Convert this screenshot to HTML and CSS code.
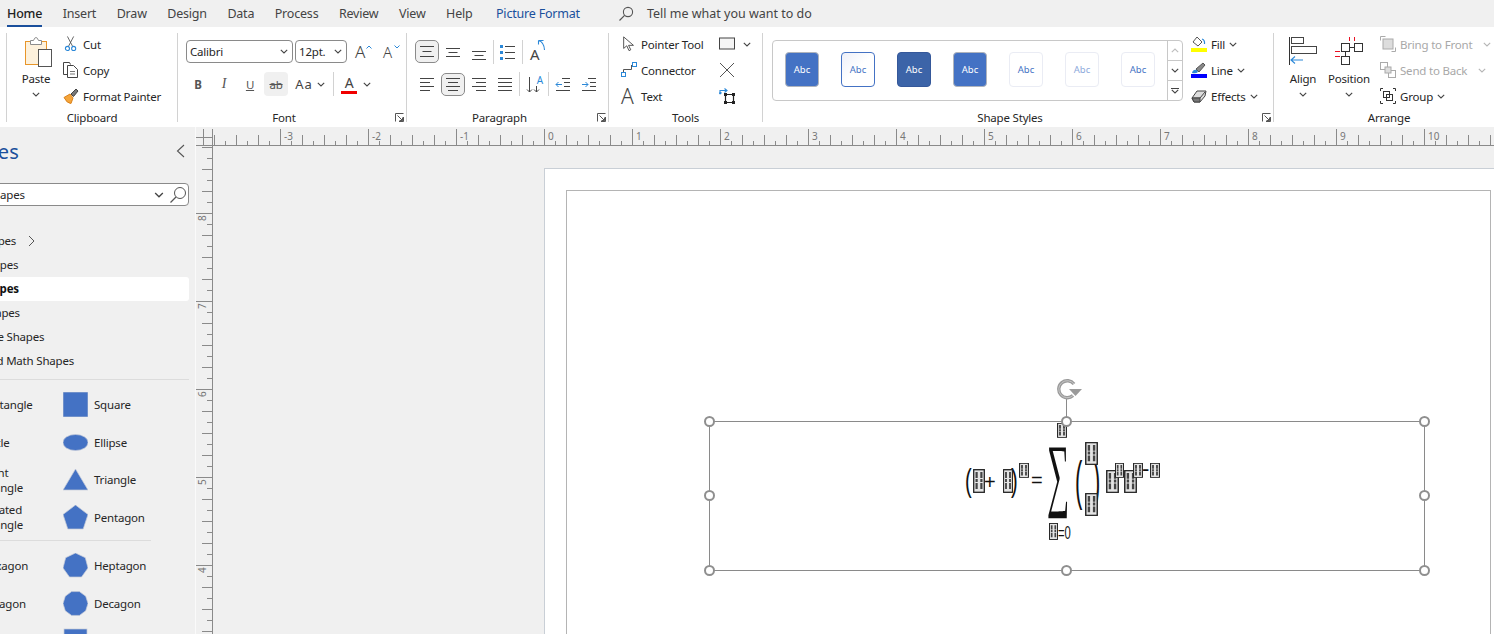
FILE: index.html
```html
<!DOCTYPE html>
<html lang="en">
<head>
    <meta charset="UTF-8">
    <title>Picture Format</title>
    <link rel="stylesheet" href="styles.css">
</head>
<body>
    <svg class="defs">
        <symbol id="chev" viewBox="0 0 8 5"><path d="M.8.8 4 4 7.2.8" fill="none" stroke="currentColor" stroke-width="1.1"/></symbol>
        <symbol id="launch" viewBox="0 0 9 9"><path d="M.5 8.5V.5h8M8.5 4v4.5H4M2.5 2.5l5 5M4.5 7.5h3v-3" fill="none" stroke="#555"/></symbol>
        <symbol id="tofu" viewBox="0 0 12 24" preserveAspectRatio="none"><rect x=".7" y=".7" width="10.6" height="22.6" fill="#e4e4e4" stroke="#222" stroke-width="1.3"/><path d="M3.600 3v18M8.400 3v18" stroke="#444" stroke-width="2.200" stroke-dasharray="6 1 3 1"/></symbol>
    </svg>

    <div class="tabs">
        <span class="tab active">Home</span>
        <span class="tab">Insert</span>
        <span class="tab">Draw</span>
        <span class="tab">Design</span>
        <span class="tab">Data</span>
        <span class="tab">Process</span>
        <span class="tab">Review</span>
        <span class="tab">View</span>
        <span class="tab">Help</span>
        <span class="tab picture">Picture Format</span>
        <svg class="tell-icon" width="16" height="16" viewBox="0 0 16 16"><circle cx="10" cy="6" r="4.6" fill="none" stroke="#555" stroke-width="1.1"/><path d="M6.6 9.4 1.5 14.5" stroke="#555" stroke-width="1.2"/></svg>
        <span class="tell">Tell me what you want to do</span>
    </div>

    <div class="ribbon">
        <section class="group clipboard first">
            <div class="big-btn paste">
                <svg width="32" height="30" viewBox="0 0 32 30"><rect x="3.500" y="4.500" width="21" height="23" fill="#fdf1dc" stroke="#e8962a"/><path d="M8.500 7.500V3.500h3q1-3 2.500-3t2.500 3h3v4z" fill="#fff" stroke="#8c8c8c"/><rect x="16.500" y="12.500" width="13" height="17" fill="#fff" stroke="#555"/></svg>
                <span>Paste</span>
                <svg class="chev"><use href="#chev"/></svg>
            </div>
            <div class="small-col">
                <div class="tool-row">
                    <svg class="ico" viewBox="0 0 16 18"><path d="M4 .5 10 12M11 .5 5 12" stroke="#555" fill="none"/><circle cx="4" cy="14" r="2.300" fill="none" stroke="#2b88d8" stroke-width="1.200"/><circle cx="11" cy="14" r="2.300" fill="none" stroke="#2b88d8" stroke-width="1.200"/></svg>
                    <span>Cut</span>
                </div>
                <div class="tool-row">
                    <svg class="ico" viewBox="0 0 16 16"><path d="M4 12.500H.5V.5h6l1 2" fill="none" stroke="#444"/><path d="M4.500 3.500h6l4 4v8h-10z" fill="#fff" stroke="#444"/><path d="M7 9.500h5M7 12h5" stroke="#777"/></svg>
                    <span>Copy</span>
                </div>
                <div class="tool-row">
                    <svg class="ico" viewBox="0 0 16 16"><path d="M1 9.500 7 6l3 4-2 5.500q-4 0-7-6z" fill="#f5a53b" stroke="#d9821d"/><path d="m8 6 5-5 2 2-4.500 5.500z" fill="#777" stroke="#444"/></svg>
                    <span>Format Painter</span>
                </div>
            </div>
            <div class="group-label">Clipboard</div>
        </section>

        <section class="group font">
            <div class="rows">
                <div class="row">
                    <div class="combo combo-name"><span>Calibri</span><svg class="chev"><use href="#chev"/></svg></div>
                    <div class="combo combo-size"><span>12pt.</span><svg class="chev"><use href="#chev"/></svg></div>
                    <span class="grow">A<svg class="caret" viewBox="0 0 6 4"><path d="M.5 3.500 3 1l2.500 2.500" fill="none" stroke="#2b88d8"/></svg></span>
                    <span class="grow shrink">A<svg class="caret" viewBox="0 0 6 4"><path d="M.5.500 3 3 5.500.500" fill="none" stroke="#2b88d8"/></svg></span>
                </div>
                <div class="row">
                    <span class="btn bold">B</span>
                    <span class="btn italic">I</span>
                    <span class="btn under">U</span>
                    <span class="btn strike on-flat">ab</span>
                    <span class="btn case">Aa<svg class="chev"><use href="#chev"/></svg></span>
                    <i class="sep sep-font"></i>
                    <span class="btn color"><span class="color-a">A</span><svg class="chev"><use href="#chev"/></svg></span>
                </div>
            </div>
            <svg class="launcher"><use href="#launch"/></svg>
            <div class="group-label">Font</div>
        </section>

        <section class="group paragraph">
            <div class="rows">
                <div class="row">
                    <span class="btn on"><svg class="ln" viewBox="0 0 16 20"><path d="M1 4.500h14M3.500 9.500h9M1 14.500h14"/></svg></span>
                    <span class="btn"><svg class="ln" viewBox="0 0 16 20"><path d="M1 6.500h14M3.500 10.500h9M1 14.500h14"/></svg></span>
                    <span class="btn"><svg class="ln" viewBox="0 0 16 20"><path d="M1 9.500h14M3.500 13.500h9M1 17.500h14"/></svg></span>
                    <i class="sep"></i>
                    <span class="btn"><svg class="ln" viewBox="0 0 16 20"><path d="M5 4.500h10M5 10.500h10M5 16.500h10"/><path d="M0 3h3v3H0zM0 9h3v3H0zM0 15h3v3H0z" fill="#2b88d8" stroke="none"/></svg></span>
                    <i class="sep"></i>
                    <span class="btn orient">A<svg class="orient-arrow" viewBox="0 0 9 11"><path d="M1.500.500h5M1.500.500v4M1.500.500Q7 2 7.500 10" fill="none" stroke="#2b88d8" stroke-width="1.100"/></svg></span>
                </div>
                <div class="row">
                    <span class="btn"><svg class="ln" viewBox="0 0 16 16"><path d="M1 2.500h14M1 6.500h10M1 10.500h14M1 14.500h10"/></svg></span>
                    <span class="btn on"><svg class="ln" viewBox="0 0 16 16"><path d="M1 2.500h14M3 6.500h10M1 10.500h14M3 14.500h10"/></svg></span>
                    <span class="btn"><svg class="ln" viewBox="0 0 16 16"><path d="M1 2.500h14M5 6.500h10M1 10.500h14M5 14.500h10"/></svg></span>
                    <span class="btn"><svg class="ln" viewBox="0 0 16 16"><path d="M1 2.500h14M1 6.500h14M1 10.500h14M1 14.500h14"/></svg></span>
                    <i class="sep"></i>
                    <span class="btn spacing"><svg class="ln" viewBox="0 0 16 20"><path d="M3.500 3v15M1 15.500 3.500 18 6 15.500M10.500 12v6M8 15.500l2.500 2.500 2.500-2.500"/></svg><span class="spacing-a">A</span></span>
                    <i class="sep"></i>
                    <span class="btn"><svg class="ln" viewBox="0 0 16 16"><path d="M7 2.500h8M9 6.500h6M9 10.500h6M1 14.500h14"/><path d="M7 8.500H1M3.500 6 1 8.500 3.500 11" stroke="#2b88d8"/></svg></span>
                    <span class="btn"><svg class="ln" viewBox="0 0 16 16"><path d="M7 2.500h8M9 6.500h6M9 10.500h6M1 14.500h14"/><path d="M1 8.500h6M4.500 6 7 8.500 4.500 11" stroke="#2b88d8"/></svg></span>
                </div>
            </div>
            <svg class="launcher"><use href="#launch"/></svg>
            <div class="group-label">Paragraph</div>
        </section>

        <section class="group tools">
            <div class="small-col tools-left">
                <div class="tool-row">
                    <svg class="ico" viewBox="0 0 16 18"><path d="M2 1v13l3.500-3 2.500 5.500 2-1-2.500-5H13z" fill="#fff" stroke="#444"/></svg>
                    <span>Pointer Tool</span>
                </div>
                <div class="tool-row">
                    <svg class="ico" viewBox="0 0 16 16"><path d="M2.500 10.500V7.500h8V3" fill="none" stroke="#555"/><rect x="11.500" y=".5" width="4" height="4" fill="#fff" stroke="#2b88d8"/><rect x=".5" y="10.500" width="4" height="4" fill="#fff" stroke="#2b88d8"/></svg>
                    <span>Connector</span>
                </div>
                <div class="tool-row">
                    <span class="text-a">A</span>
                    <span>Text</span>
                </div>
            </div>
            <div class="small-col tools-right">
                <div class="tool-row">
                    <svg class="ico" viewBox="0 0 16 13"><rect x=".5" y=".5" width="15" height="11" fill="#f5f5f5" stroke="#444"/></svg>
                    <svg class="chev chev-rect"><use href="#chev"/></svg>
                </div>
                <div class="tool-row">
                    <svg class="ico" viewBox="0 0 16 16"><path d="m1 1 14 14M15 1 1 15" stroke="#555"/></svg>
                </div>
                <div class="tool-row">
                    <svg class="ico" viewBox="0 0 16 16"><path d="M6.500 6.500h8v8h-8z" fill="none" stroke="#222" stroke-width="1.200"/><path d="M5 5h3v3H5zM13 5h3v3h-3zM5 13h3v3H5zM13 13h3v3h-3z" fill="#222"/><path d="M1 6V2.500h7M5.500.5 8 2.500 5.500 4.500M1 6 0 4.500M1 6l1.500-1.500" fill="none" stroke="#2b88d8" stroke-width="1.100"/></svg>
                </div>
            </div>
            <div class="group-label">Tools</div>
        </section>

        <section class="group styles">
            <div class="styles-main">
                <div class="gallery">
                    <div class="thumbs">
                        <span class="thumb solid">Abc</span>
                        <span class="thumb outline">Abc</span>
                        <span class="thumb dark">Abc</span>
                        <span class="thumb solid">Abc</span>
                        <span class="thumb plain">Abc</span>
                        <span class="thumb plain light">Abc</span>
                        <span class="thumb plain">Abc</span>
                    </div>
                    <div class="scroller">
                        <span class="scroll-btn up"><svg class="chev"><use href="#chev"/></svg></span>
                        <span class="scroll-btn"><svg class="chev"><use href="#chev"/></svg></span>
                        <span class="scroll-btn more"><svg class="chev"><use href="#chev"/></svg></span>
                    </div>
                </div>
                <div class="small-col effects">
                    <div class="tool-row">
                        <svg class="ico" viewBox="0 0 16 16"><path d="m6 1 5 5-4 4-5-4z" fill="#fff" stroke="#555"/><path d="M11 3q3 1 2.500 5" fill="none" stroke="#2b88d8" stroke-width="1.200"/><path d="M0 12h16v4H0z" fill="#ffff00"/></svg>
                        <span>Fill</span><svg class="chev"><use href="#chev"/></svg>
                    </div>
                    <div class="tool-row">
                        <svg class="ico" viewBox="0 0 16 16"><path d="m5 7 7-6 2 2-6 7z" fill="#888" stroke="#555"/><path d="M1 11q1-4 5-3l1 2q-2 2-6 1z" fill="#2b88d8"/><path d="M0 12h16v4H0z" fill="#0000ff"/></svg>
                        <span>Line</span><svg class="chev"><use href="#chev"/></svg>
                    </div>
                    <div class="tool-row">
                        <svg class="ico" viewBox="0 0 16 16"><path d="M1 10 6 3h9l-1 5-5 6H3z" fill="#ddd" stroke="#444"/><path d="M1 10h8l5-6" fill="none" stroke="#444"/><path d="M1 10h8v4H3z" fill="#777" stroke="#444"/></svg>
                        <span>Effects</span><svg class="chev"><use href="#chev"/></svg>
                    </div>
                </div>
            </div>
            <svg class="launcher"><use href="#launch"/></svg>
            <div class="group-label">Shape Styles</div>
        </section>

        <section class="group arrange">
            <div class="arrange-main">
                <div class="big-btn align">
                    <svg width="30" height="30" viewBox="0 0 30 30"><path d="M1.500 0v28" stroke="#333"/><rect x="3.500" y=".5" width="12" height="6" fill="#fff" stroke="#444"/><rect x="3.500" y="9.500" width="25" height="7" fill="#fff" stroke="#444"/><path d="M3 23h12M7 19.500 3 23l4 3.500" fill="none" stroke="#2b88d8" stroke-width="1.100"/></svg>
                    <span>Align</span>
                    <svg class="chev"><use href="#chev"/></svg>
                </div>
                <div class="big-btn position">
                    <svg width="30" height="30" viewBox="0 0 30 30"><path d="M15.500 0v4M20.500 0v4M1 14.500h5M1 19.500h5" stroke="#e81123"/><path d="M16 10.500h4M11.500 15v4" stroke="#333"/><rect x="7.500" y="6.500" width="8" height="8" fill="#fff" stroke="#333"/><rect x="20.500" y="6.500" width="8" height="8" fill="#fff" stroke="#333"/><rect x="7.500" y="19.500" width="8" height="8" fill="#fff" stroke="#333"/></svg>
                    <span>Position</span>
                    <svg class="chev"><use href="#chev"/></svg>
                </div>
                <div class="small-col order">
                    <div class="tool-row off">
                        <svg class="ico" viewBox="0 0 16 16"><path d="M.5 4.500v-4h5M11.500 15.500h4v-4" fill="none" stroke="#aaa"/><rect x="3" y="3" width="10" height="10" fill="#ddd" stroke="#aaa"/></svg>
                        <span>Bring to Front</span><svg class="chev chev-far"><use href="#chev"/></svg>
                    </div>
                    <div class="tool-row off">
                        <svg class="ico" viewBox="0 0 16 16"><rect x=".5" y=".5" width="7" height="7" fill="#fff" stroke="#aaa"/><rect x="8.500" y="8.500" width="7" height="7" fill="#fff" stroke="#aaa"/><rect x="5" y="5" width="6" height="6" fill="#ddd" stroke="#aaa"/></svg>
                        <span>Send to Back</span><svg class="chev chev-far"><use href="#chev"/></svg>
                    </div>
                    <div class="tool-row">
                        <svg class="ico" viewBox="0 0 16 16"><path d="M.5 3V.5H3M13 .5h2.500V3M15.500 13v2.500H13M3 15.500H.5V13" fill="none" stroke="#333"/><rect x="3.500" y="3.500" width="6" height="6" fill="#fff" stroke="#333"/><rect x="6.500" y="6.500" width="6" height="6" fill="none" stroke="#333"/></svg>
                        <span>Group</span><svg class="chev"><use href="#chev"/></svg>
                    </div>
                </div>
            </div>
            <div class="group-label">Arrange</div>
        </section>
    </div>

    <div class="workspace">
        <aside class="sidebar">
            <div class="sidebar-inner">
                <div class="side-title">
                    <span>Shapes</span>
                    <svg width="9" height="14" viewBox="0 0 9 14"><path d="M8 1 1.500 7 8 13" fill="none" stroke="#555" stroke-width="1.100"/></svg>
                </div>
                <div class="search">
                    <span>Search Shapes</span>
                    <svg class="chev"><use href="#chev"/></svg>
                    <svg width="18" height="18" viewBox="0 0 18 18"><circle cx="11" cy="7" r="5.500" fill="none" stroke="#555"/><path d="M7 11 1.500 16.500" stroke="#555" stroke-width="1.200"/></svg>
                </div>
                <ul class="categories">
                    <li>More Shapes <svg width="7" height="12" viewBox="0 0 7 12"><path d="m1 1 5 5-5 5" fill="none" stroke="#555"/></svg></li>
                    <li>Quick Shapes</li>
                    <li class="selected">Basic Shapes</li>
                    <li>Arrow Shapes</li>
                    <li>Decorative Shapes</li>
                    <li>Graph and Math Shapes</li>
                </ul>
                <hr class="side-sep">
                <div class="stencils">
                    <div class="stencil"><svg class="sh" viewBox="0 0 25 25"><rect y="5" width="25" height="15"/></svg><span>Rectangle</span></div>
                    <div class="stencil"><svg class="sh" viewBox="0 0 25 25"><rect width="25" height="25"/></svg><span>Square</span></div>
                    <div class="stencil"><svg class="sh" viewBox="0 0 25 25"><circle cx="12.500" cy="12.500" r="12"/></svg><span>Circle</span></div>
                    <div class="stencil"><svg class="sh" viewBox="0 0 25 25"><ellipse cx="12.500" cy="12.500" rx="12.500" ry="8"/></svg><span>Ellipse</span></div>
                    <div class="stencil"><svg class="sh" viewBox="0 0 25 25"><path d="M0 24V2l25 22z"/></svg><span>Right<br>Triangle</span></div>
                    <div class="stencil"><svg class="sh" viewBox="0 0 25 25"><path d="M12.500 2 25 23H0z"/></svg><span>Triangle</span></div>
                    <div class="stencil"><svg class="sh" viewBox="0 0 25 25"><path d="M0 2l25 11L0 24z"/></svg><span>Rotated<br>Triangle</span></div>
                    <div class="stencil"><svg class="sh" viewBox="0 0 25 25"><path d="M12.500 0 25 9.500l-4.800 14.500H4.800L0 9.500z"/></svg><span>Pentagon</span></div>
                </div>
                <hr class="side-sep short">
                <div class="stencils">
                    <div class="stencil"><svg class="sh" viewBox="0 0 25 25"><path d="M6 1h13l6 11.500-6 11.500H6L0 12.500z"/></svg><span>Hexagon</span></div>
                    <div class="stencil"><svg class="sh" viewBox="0 0 25 25"><path d="M12.500 0 22.300 4.700 25 15l-6.500 9h-12L0 15l2.700-10.300z"/></svg><span>Heptagon</span></div>
                    <div class="stencil"><svg class="sh" viewBox="0 0 25 25"><path d="M7.500 0h10L25 7.500v10L17.500 25h-10L0 17.500v-10z"/></svg><span>Octagon</span></div>
                    <div class="stencil"><svg class="sh" viewBox="0 0 25 25"><path d="M8.600.6h7.800l6.300 4.600L25 12.500l-2.300 7.300-6.300 4.600H8.600l-6.300-4.600L0 12.500l2.300-7.300z"/></svg><span>Decagon</span></div>
                    <div class="stencil"><svg class="sh" viewBox="0 0 25 25"><rect width="25" height="25"/></svg><span>Can</span></div>
                    <div class="stencil"><svg class="sh" viewBox="0 0 25 25"><rect x="1" y="1" width="23" height="23"/></svg><span>Cross</span></div>
                </div>
            </div>
        </aside>

        <main class="board">
            <div class="corner"></div>
            <div class="ruler-h">
                <span>-3</span><span>-2</span><span>-1</span><span>0</span><span>1</span><span>2</span><span>3</span><span>4</span><span>5</span><span>6</span><span>7</span><span>8</span><span>9</span><span>10</span>
            </div>
            <div class="ruler-v">
                <span>8</span><span>7</span><span>6</span><span>5</span><span>4</span>
            </div>
            <div class="canvas">
                <div class="page">
                    <div class="frame">
                        <div class="selection">
                            <svg class="formula" viewBox="709 421 716 150">
                                <text class="paren" transform="translate(965 491) scale(1 1.600)">(</text>
                                <text class="op thin" x="984" y="489">+</text>
                                <text class="paren" transform="translate(1011 491) scale(1 1.600)">)</text>
                                <text class="op thin" x="1031" y="487">=</text>
                                <text class="sum" transform="translate(1047 501) scale(.78 2.040)">∑</text>
                                <text class="paren" transform="translate(1075 499) scale(1.100 2.700)">(</text>
                                <text class="paren" transform="translate(1093 499) scale(1.100 2.700)">)</text>
                                <text class="op small" transform="translate(1058 539) scale(.75 1.250)">=0</text>
                                <text class="op" x="1142" y="476">-</text>
                                <use href="#tofu" x="973" y="469" width="12" height="24"/>
                                <use href="#tofu" x="1003" y="469" width="10" height="24"/>
                                <use href="#tofu" x="1019" y="463" width="10" height="15"/>
                                <use href="#tofu" x="1057" y="423" width="10" height="15"/>
                                <use href="#tofu" x="1049" y="523" width="9" height="17"/>
                                <use href="#tofu" x="1085" y="442" width="13" height="23"/>
                                <use href="#tofu" x="1085" y="493" width="13" height="23"/>
                                <use href="#tofu" x="1106" y="470" width="13" height="23"/>
                                <use href="#tofu" x="1115" y="463" width="9" height="15"/>
                                <use href="#tofu" x="1124" y="470" width="13" height="23"/>
                                <use href="#tofu" x="1133" y="463" width="10" height="15"/>
                                <use href="#tofu" x="1150" y="463" width="10" height="15"/>
                            </svg>
                            <i class="stem"></i>
                            <svg class="rotate" width="28" height="22" viewBox="0 0 28 22"><path d="M18 5A8.500 8.500 0 1 0 17 16.500" fill="none" stroke="#9a9a9a" stroke-width="3.400"/><path d="M18 5A8.500 8.500 0 1 0 17 16.500" fill="none" stroke="#d0d0d0" stroke-width=".8"/><path d="M13 10h13l-6.500 7z" fill="#9a9a9a"/></svg>
                            <i class="handle tl"></i><i class="handle tc"></i><i class="handle tr"></i>
                            <i class="handle ml"></i><i class="handle mr"></i>
                            <i class="handle bl"></i><i class="handle bc"></i><i class="handle br"></i>
                        </div>
                    </div>
                </div>
            </div>
        </main>
    </div>
</body>
</html>
```

FILE: styles.css
```css
* {
    box-sizing: border-box;
}
body {
    margin: 0;
    width: 1494px;
    height: 634px;
    overflow: hidden;
    display: flex;
    flex-direction: column;
    background-color: #f0f0f0;
    color: #262626;
    font-family: "Noto Sans", "Open Sans", sans-serif;
    font-size: 11.5px;
    letter-spacing: -.2px;
}
.defs {
    position: absolute;
    width: 0;
    height: 0;
}
.chev {
    width: 8px;
    height: 5px;
    flex: none;
    color: #444;
}

/* tabs */
.tabs {
    height: 27px;
    flex: none;
    display: flex;
    padding-left: 7px;
    font-size: 12.5px;
    color: #444;
    align-items: center;
}
.tab {
    margin-right: 20.5px;
    line-height: 27px;
    height: 27px;
}
.tab.active {
    color: #222;
    box-shadow: inset 0 -2px 0 #1a4f9c;
    font-weight: 500;
}
.tab.picture {
    color: #1a4f9c;
    margin-left: 3px;
    margin-right: 38px;
}
.tell-icon {
    margin-right: 13px;
}
.tell {
    color: #444;
    letter-spacing: 0;
}

/* ribbon */
.ribbon {
    height: 100px;
    flex: none;
    display: flex;
    padding: 6px 0 0 6px;
    background-color: #fff;
}
.group {
    position: relative;
    height: 89px;
    flex: none;
    display: flex;
    flex-wrap: wrap;
    align-content: flex-start;
    border-right: 1px solid #d2d2d2;
}
.group.first {
    border-left: 1px solid #d2d2d2;
}
.group-label {
    position: absolute;
    left: 0;
    right: 0;
    bottom: -3px;
    height: 14px;
    line-height: 14px;
    text-align: center;
}
.font .group-label,
.paragraph .group-label,
.styles .group-label {
    right: 16px;
}
.arrange .group-label {
    left: 10px;
}
.launcher {
    position: absolute;
    right: 2px;
    bottom: 0;
    width: 9px;
    height: 9px;
}
.clipboard {
    width: 172px;
}
.font {
    width: 229px;
    padding-left: 8px;
}
.paragraph {
    width: 202px;
    padding-left: 8px;
}
.tools {
    width: 154px;
    padding-left: 12px;
}
.styles {
    width: 511px;
    padding-left: 9px;
}
.arrange {
    width: 220px;
    padding-left: 14px;
    border-right: none;
}

.big-btn {
    display: flex;
    flex-direction: column;
    align-items: center;
    padding-top: 4px;
}
.big-btn span {
    margin-top: 4px;
    line-height: 16px;
}
.big-btn .chev {
    margin-top: 5px;
}
.paste {
    width: 32px;
    margin-left: 15px;
}
.paste span,
.paste .chev {
    margin-right: 4px;
}
.align {
    width: 30px;
}
.position {
    width: 46px;
    margin-left: 8px;
}
.small-col {
    display: flex;
    flex-direction: column;
    gap: 4px;
}
.clipboard .small-col {
    margin-left: 9px;
}
.tool-row {
    height: 22px;
    display: flex;
    align-items: center;
    white-space: nowrap;
}
.tool-row .chev {
    margin-left: 4px;
}
.tool-row.off {
    color: #a8a8a8;
}
.tool-row.off .chev {
    color: #b5b5b5;
}
.tool-row .chev-far {
    margin-left: 11px;
}
.ico {
    width: 16px;
    height: 16px;
    flex: none;
    margin-right: 4px;
}
.rows {
    padding-top: 7px;
    display: flex;
    flex-direction: column;
    gap: 9px;
}
.row {
    height: 23px;
    display: flex;
    align-items: center;
    gap: 2px;
}
.row + .row {
    height: 24px;
}
.combo {
    height: 23px;
    display: flex;
    align-items: center;
    justify-content: space-between;
    padding: 0 4px 0 3px;
    border: 1px solid #8a8a8a;
    border-radius: 4px;
}
.combo-name {
    width: 107px;
}
.combo-size {
    width: 52px;
}
.grow {
    position: relative;
    width: 17px;
    margin-left: 6px;
    font-size: 17px;
    line-height: 20px;
    color: #444;
    font-weight: 300;
}
.grow.shrink {
    margin-left: 9px;
    font-size: 15px;
}
.caret {
    position: absolute;
    top: 3px;
    right: 0;
    width: 6px;
    height: 4px;
}
.btn {
    width: 24px;
    height: 23px;
    flex: none;
    display: flex;
    align-items: center;
    justify-content: center;
    border-radius: 4px;
    position: relative;
}
.bold {
    font-weight: 700;
    color: #555;
}
.italic {
    font-style: italic;
    font-family: "Liberation Serif", serif;
    font-size: 14px;
    color: #555;
}
.under {
    text-decoration: underline;
    color: #555;
}
.strike {
    text-decoration: line-through;
    color: #555;
}
.on-flat {
    background-color: #f0f0f0;
    height: 24px;
}
.btn.on {
    background-color: #f0f0f0;
    border: 1px solid #8a8a8a;
    border-radius: 5px;
}
.case {
    width: 36px;
    margin-left: 2px;
    gap: 4px;
    font-size: 13px;
    color: #444;
    letter-spacing: 1px;
}
.color {
    width: 34px;
    gap: 6px;
    margin-left: 2px;
    justify-content: flex-start;
}
.color-a {
    width: 16px;
    text-align: center;
    font-size: 14px;
    line-height: 16px;
    color: #444;
    border-bottom: 3px solid #f00000;
}
.sep {
    width: 1px;
    height: 24px;
    flex: none;
    background-color: #d2d2d2;
}
.sep-font {
    margin: 0 3px;
}
.ln {
    width: 16px;
    height: 20px;
    fill: none;
    stroke: #444;
}
.row + .row .ln {
    height: 16px;
}
.row + .row .spacing .ln {
    height: 20px;
}
.orient {
    font-size: 15px;
    color: #444;
    justify-content: flex-start;
    align-items: flex-end;
    padding-left: 5px;
    line-height: 18px;
}
.orient-arrow {
    position: absolute;
    top: 0;
    right: 3px;
    width: 9px;
    height: 11px;
}
.spacing-a {
    position: absolute;
    top: 1px;
    right: 3px;
    font-size: 10px;
    line-height: 12px;
    color: #2b88d8;
}
.tools-left {
    width: 98px;
}
.text-a {
    width: 16px;
    margin-right: 4px;
    font-size: 21px;
    font-weight: 300;
    line-height: 22px;
    color: #444;
}
.chev-rect {
    margin-left: 6px;
}

/* shape styles */
.styles-main {
    display: flex;
    align-items: flex-start;
}
.gallery {
    width: 411px;
    height: 61px;
    margin-top: 7px;
    display: flex;
    border: 1px solid #c8c8c8;
    border-radius: 4px;
}
.thumbs {
    flex: 1;
    display: flex;
    gap: 22px;
    padding: 11px 0 0 12px;
}
.thumb {
    width: 34px;
    height: 35px;
    display: flex;
    align-items: center;
    justify-content: center;
    border-radius: 4px;
    font-size: 9.5px;
    letter-spacing: 0;
}
.thumb.solid {
    background-color: #4472c4;
    border: 1px solid #b0b4bc;
    color: #fff;
}
.thumb.outline {
    background: linear-gradient(135deg, #eef0f8, #fff 50%);
    border: 1px solid #4472c4;
    color: #4472c4;
}
.thumb.dark {
    background-color: #3c64a8;
    border: 1px solid #35589a;
    color: #fff;
}
.thumb.plain {
    border: 1px solid #eaecf4;
    color: #4472c4;
}
.thumb.light {
    color: #8ea9db;
}
.scroller {
    width: 15px;
    display: flex;
    flex-direction: column;
    border-left: 1px solid #c8c8c8;
}
.scroll-btn {
    flex: 1;
    display: flex;
    align-items: center;
    justify-content: center;
}
.scroll-btn + .scroll-btn {
    border-top: 1px solid #c8c8c8;
}
.scroll-btn.up .chev {
    transform: rotate(180deg);
    color: #bdbdbd;
}
.scroll-btn.more .chev {
    border-top: 1px solid #444;
    height: 6px;
}
.effects {
    margin-left: 8px;
}

/* arrange */
.arrange-main {
    display: flex;
    align-items: flex-start;
}
.order {
    margin-left: 8px;
}

/* workspace */
.workspace {
    flex: 1;
    min-height: 0;
    display: flex;
}
.sidebar {
    width: 196px;
    flex: none;
    overflow: hidden;
    border-right: 1px solid #fafafa;
}
.sidebar-inner {
    width: 249px;
    margin-left: -60px;
}
.side-title {
    height: 30px;
    margin-top: 9px;
    padding: 0 4px 0 11px;
    display: flex;
    align-items: center;
    justify-content: space-between;
    font-size: 20px;
    letter-spacing: 0;
    color: #1a4f9c;
}
.search {
    height: 23px;
    margin-top: 17px;
    padding: 0 1px 0 8px;
    display: flex;
    align-items: center;
    background-color: #fff;
    border: 1px solid #8a8a8a;
    border-radius: 4px;
}
.search span {
    flex: 1;
}
.search .chev {
    margin-right: 5px;
    width: 10px;
    height: 6px;
}
.categories {
    list-style: none;
    margin: 23px 0 0;
    padding: 0;
}
.categories li {
    height: 24px;
    line-height: 24px;
    padding-left: 8px;
    border-radius: 3px;
}
.categories li svg {
    margin-left: 9px;
    vertical-align: -2px;
}
.categories li.selected {
    background-color: #fff;
    font-weight: 700;
    color: #111;
}
.side-sep {
    margin: 6px 0;
    border: none;
    border-top: 1px solid #dcdcdc;
}
.side-sep.short {
    width: 211px;
    margin: 4px 0 6px;
}
.stencils {
    display: grid;
    grid-template-columns: 113px 1fr;
    grid-auto-rows: 37.5px;
    padding-left: 10px;
}
.stencil {
    display: flex;
    align-items: center;
    line-height: 15px;
}
.sh {
    width: 25px;
    height: 25px;
    flex: none;
    margin-right: 6px;
    fill: #4472c4;
    stroke: #c6ccd8;
    stroke-width: .7;
}

/* rulers */
.board {
    flex: 1;
    min-width: 0;
    padding-top: 2px;
    display: grid;
    grid-template-columns: 17px 1fr;
    grid-template-rows: 17px 1fr;
}
.corner {
    border-bottom: 1px solid #8a8a8a;
    background:
        linear-gradient(#8a8a8a, #8a8a8a) 7px 0 / 1px 100% no-repeat,
        linear-gradient(#8a8a8a, #8a8a8a) 16px 0 / 1px 100% no-repeat,
        linear-gradient(#8a8a8a, #8a8a8a) 0 8px / 100% 1px no-repeat;
}
.ruler-h {
    display: flex;
    padding-left: 67px;
    overflow: hidden;
    border-bottom: 1px solid #8a8a8a;
    font-size: 10px;
    line-height: 12px;
    letter-spacing: 0;
    color: #777;
    background:
        linear-gradient(to right, #8a8a8a 1px, transparent 1px) 67px 0 / 88px 100% repeat-x,
        linear-gradient(to right, #8a8a8a 1px, transparent 1px) 67px bottom / 22px 10px repeat-x,
        linear-gradient(to right, #8a8a8a 1px, transparent 1px) 67px bottom / 11px 4px repeat-x;
}
.ruler-h span {
    width: 88px;
    flex: none;
    padding: 1px 0 0 4px;
}
.ruler-v {
    display: flex;
    flex-direction: column;
    padding-top: 67px;
    overflow: hidden;
    border-right: 1px solid #8a8a8a;
    font-size: 10px;
    letter-spacing: 0;
    color: #777;
    background:
        linear-gradient(#8a8a8a 1px, transparent 1px) 0 67px / 100% 88px repeat-y,
        linear-gradient(#8a8a8a 1px, transparent 1px) right 67px / 10px 22px repeat-y,
        linear-gradient(#8a8a8a 1px, transparent 1px) right 67px / 5px 11px repeat-y;
}
.ruler-v span {
    height: 88px;
    flex: none;
    display: block;
    width: 12px;
    padding-bottom: 2px;
    line-height: 12px;
    writing-mode: vertical-rl;
    transform: rotate(180deg);
    text-align: right;
}

/* canvas */
.canvas {
    min-height: 0;
    overflow: hidden;
    padding: 22px 0 0 331px;
}
.page {
    width: 950px;
    height: 600px;
    padding: 21px 3px 0 21px;
    background-color: #fff;
    border-top: 1px solid #c9cfd6;
    border-left: 1px solid #c9cfd6;
}
.frame {
    position: relative;
    height: 100%;
    border-top: 1px solid #b4b4b4;
    border-left: 1px solid #b4b4b4;
    border-right: 1px solid #b4b4b4;
}
.selection {
    position: absolute;
    left: 142px;
    top: 230px;
    width: 716px;
    height: 150px;
    border: 1px solid #8a8a8a;
}
.formula {
    position: absolute;
    left: -1px;
    top: -1px;
    width: 716px;
    height: 150px;
    overflow: visible;
}
.paren,
.op,
.sum {
    font-family: "Liberation Serif", serif;
    fill: #111;
}
.paren {
    font-family: "Liberation Sans", sans-serif;
    font-size: 20px;
}
.op {
    font-size: 22px;
    font-family: "Liberation Sans", sans-serif;
}
.op.thin {
    font-size: 20px;
    font-weight: 400;
}
.op.small {
    font-size: 15px;
}
.sum {
    font-size: 40px;
}
.stem {
    position: absolute;
    left: 356px;
    top: -24px;
    width: 1px;
    height: 24px;
    background-color: #8a8a8a;
}
.rotate {
    position: absolute;
    left: 346px;
    top: -43px;
}
.handle {
    position: absolute;
    width: 11px;
    height: 11px;
    background-color: #fff;
    border: 2px solid #8f8f8f;
    border-radius: 50%;
}
.tl, .tc, .tr {
    top: -6px;
}
.ml, .mr {
    top: 68px;
}
.bl, .bc, .br {
    bottom: -6px;
}
.tl, .ml, .bl {
    left: -6px;
}
.tc, .bc {
    left: 351px;
}
.tr, .mr, .br {
    right: -6px;
}
```
